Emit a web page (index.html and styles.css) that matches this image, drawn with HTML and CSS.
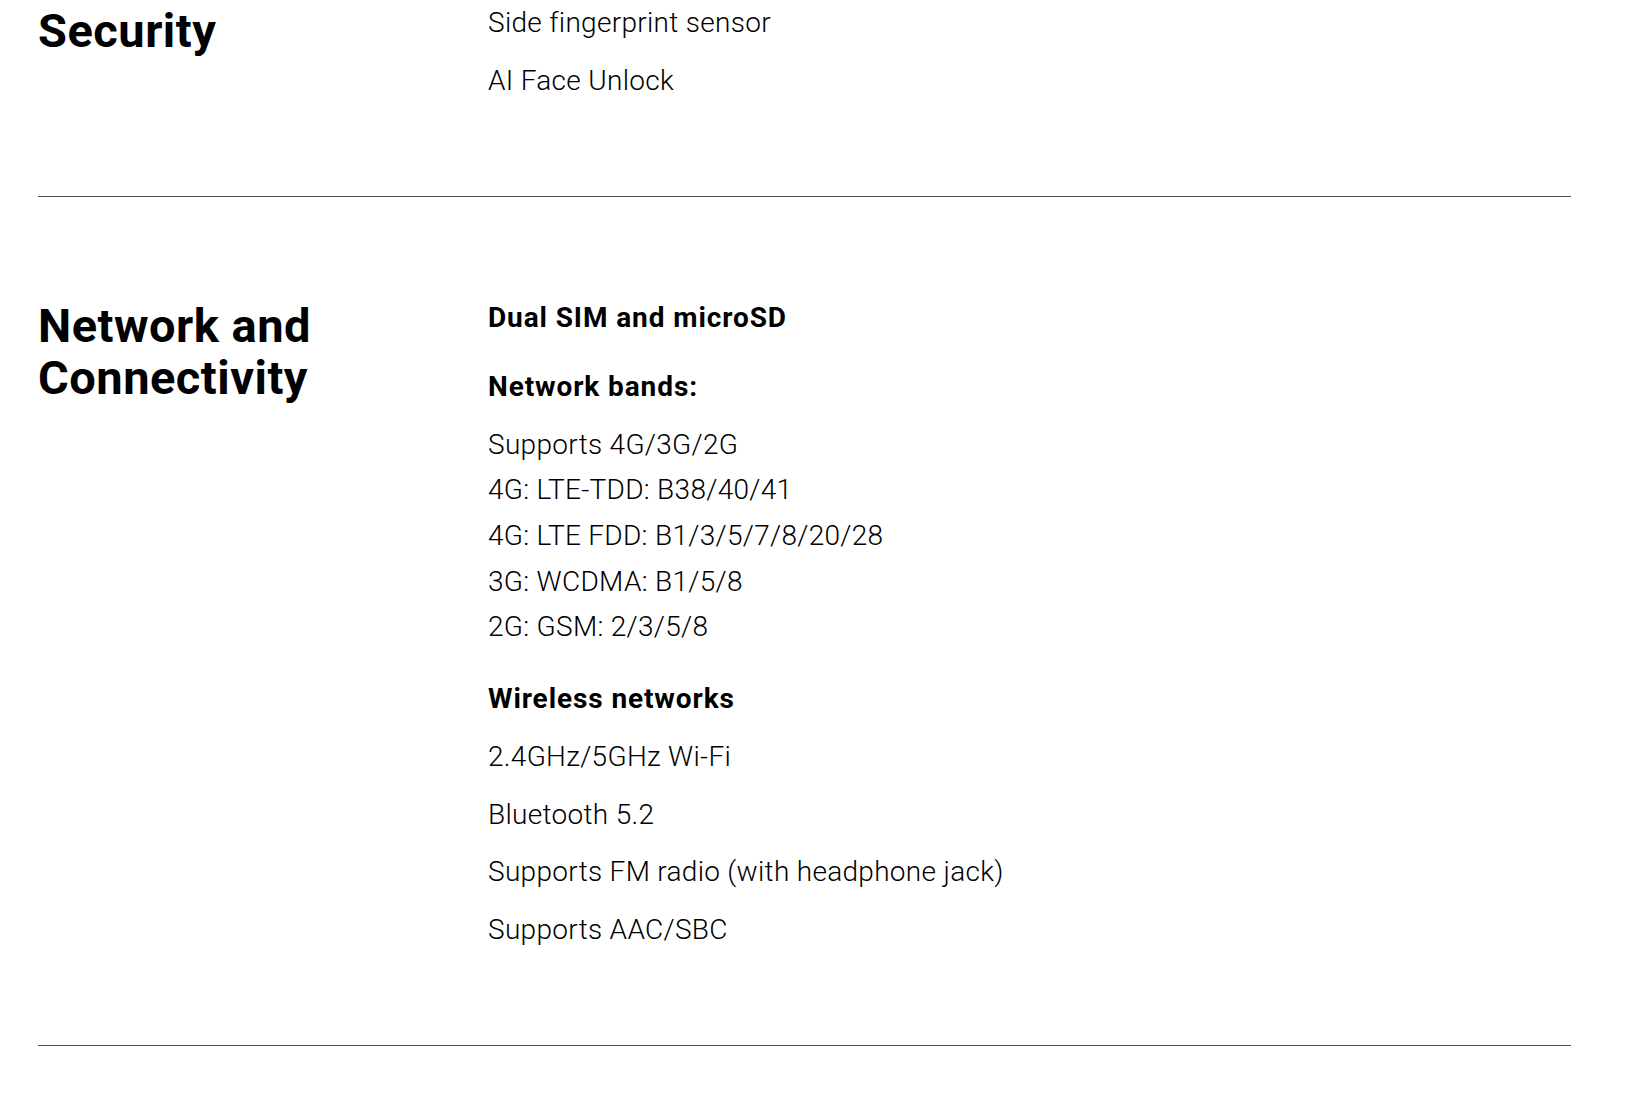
FILE: index.html
```html
<!DOCTYPE html>
<html lang="en">
<head>
<meta charset="utf-8">
<title>Specs</title>
<link rel="stylesheet" href="styles.css">
</head>
<body>
<main class="specs">
  <section class="spec spec--first">
    <h2 class="spec-title">Security</h2>
    <div class="spec-body">
      <p class="item">Side fingerprint sensor</p>
      <p class="item">AI Face Unlock</p>
    </div>
  </section>
  <section class="spec">
    <h2 class="spec-title">Network and<br>Connectivity</h2>
    <div class="spec-body">
      <p class="item sub sub--first">Dual SIM and microSD</p>
      <p class="item sub">Network bands:</p>
      <p class="item item--list">Supports 4G/3G/2G<br>4G: LTE-TDD: B38/40/41<br>4G: LTE FDD: B1/3/5/7/8/20/28<br>3G: WCDMA: B1/5/8<br>2G: GSM: 2/3/5/8</p>
      <p class="item sub">Wireless networks</p>
      <p class="item">2.4GHz/5GHz Wi-Fi</p>
      <p class="item">Bluetooth 5.2</p>
      <p class="item">Supports FM radio (with headphone jack)</p>
      <p class="item">Supports AAC/SBC</p>
    </div>
  </section>
</main>
</body>
</html>
```
FILE: styles.css
```css
html, body {
  margin: 0;
  padding: 0;
  background: #ffffff;
}
body {
  font-family: Roboto, "Noto Sans", "Liberation Sans", sans-serif;
  color: #000000;
}
.specs {
  width: 1533px;
  margin-left: 38px;
}
.spec {
  display: grid;
  grid-template-columns: 450px 1fr;
  padding: 98px 0 93px;
  border-bottom: 1px solid #4f4f4f;
}
.spec--first {
  padding-top: 0;
}
.spec-title {
  margin: 5px 0 0;
  font-size: 47px;
  line-height: 52px;
  font-weight: 700;
  letter-spacing: 0.5px;
}
.spec-body {
  display: flex;
  flex-direction: column;
  gap: 12px;
}
.item {
  margin: 0;
  font-size: 28px;
  line-height: 45.6px;
  font-weight: 300;
  letter-spacing: 0.3px;
}
.item--list {
  margin-bottom: 3px;
}
.sub {
  font-weight: 700;
  letter-spacing: 0.9px;
  margin-top: 11.5px;
}
.sub--first {
  margin-top: 0;
}
```
